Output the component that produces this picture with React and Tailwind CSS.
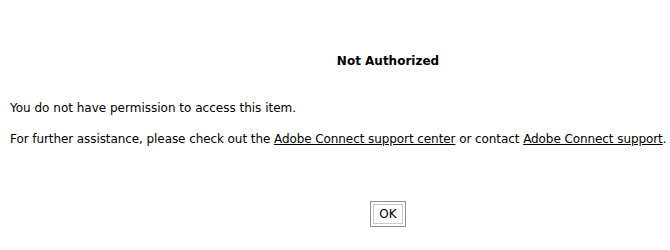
export default function App() {
  return (
    <div className="w-[670px] h-[250px] overflow-hidden bg-white">
      <div className="w-[776px] pt-[54px] px-[10px] text-[12px] leading-[15px] text-black font-['DejaVu_Sans',Verdana,sans-serif]">
        <h1 className="text-center font-bold text-[12px]">Not Authorized</h1>
        <p className="mt-[32px]">You do not have permission to access this item.</p>
        <p className="mt-[16px] tracking-[-0.08px]">
          For further assistance, please check out the{' '}
          <a href="#" className="underline">Adobe Connect support center</a> or contact{' '}
          <a href="#" className="underline">Adobe Connect support</a>.
        </p>
        <div className="flex justify-center mt-[54px]">
          <button className="w-[36px] h-[26px] border border-[#8b9090] bg-white p-[2px]">
            <span className="flex items-center justify-center w-full h-full border border-[#c9cccc] text-[12px]">
              OK
            </span>
          </button>
        </div>
      </div>
    </div>
  )
}
